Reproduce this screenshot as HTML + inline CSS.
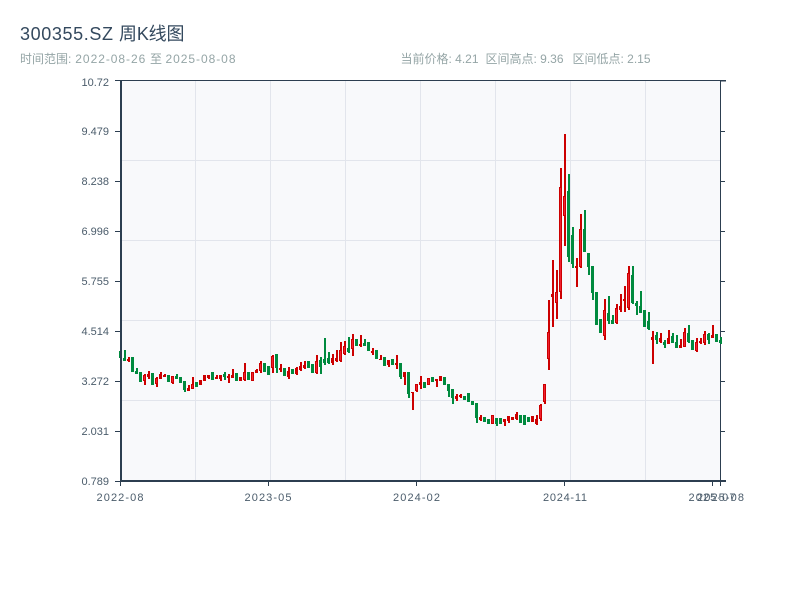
<!DOCTYPE html>
<html><head><meta charset="utf-8"><title>300355.SZ 周K线图</title>
<style>
html,body{margin:0;padding:0;background:#fff;width:800px;height:600px;overflow:hidden}
svg{display:block;font-family:"Liberation Sans","Noto Sans CJK SC",sans-serif}
</style></head><body>
<svg width="800" height="600" viewBox="0 0 800 600" xmlns="http://www.w3.org/2000/svg">
<text x="20" y="40" font-size="18" fill="#34495e" textLength="93">300355.SZ</text>
<text x="119" y="40" font-size="18" fill="#34495e" textLength="65.5">周K线图</text>
<g font-size="12" fill="#95a5a6">
<text x="20" y="63">时间范围:</text>
<text x="75.3" y="63" textLength="70">2022-08-26</text>
<text x="150" y="63">至</text>
<text x="165.5" y="63" textLength="70">2025-08-08</text>
<text x="400.5" y="63">当前价格: 4.21</text>
<text x="485.5" y="63">区间高点: 9.36</text>
<text x="572.5" y="63">区间低点: 2.15</text>
</g>
<rect x="120" y="81" width="600" height="400" fill="#f8f9fb"/>
<path d="M122 160.5H720M122 240.5H720M122 320.5H720M122 400.5H720M195.5 81V481M270.5 81V481M345.5 81V481M420.5 81V481M495.5 81V481M570.5 81V481M645.5 81V481" stroke="#e2e5ec" stroke-width="1" fill="none"/>
<path d="M720.5 80V481M720 81H726M720 131.5H725M720 181.5H725M720 231.5H725M720 281.5H725M720 331.5H725M720 381.5H725M720 431.5H725" stroke="#2c3e50" stroke-width="1" fill="none"/>
<g fill="none" stroke="#008a3e">
<path stroke-width="2" d="M121 351V358M125 350V361M133 357V372M137 368V374M141 372V382M153 373V385M169 375V382M177 374V379M181 377V383M185 381V392M197 382V387M213 372V380M225 372V380M237 373V381M249 372V380M265 363V372M269 366V375M277 354V373M285 368V376M293 369V374M309 361V368M313 364V373M321 357V374M325 338V365M329 352V364M349 337V353M357 339V346M365 339V346M369 342V351M377 350V359M385 357V366M393 359V365M401 363V379M409 372V398M425 382V388M433 377V382M445 377V385M449 384V397M453 389V404M465 396V400M469 393V402M473 401V405M477 403V423M485 417V422M489 419V424M497 418V426M501 418V424M521 415V423M525 415V425M529 417V422M569 174V262M573 227V268M585 210V252M589 253V275M593 266V300M597 292V325M601 319V333M609 296V324M613 315V324M633 266V304M637 301V315M641 291V313M645 310V327M649 312V330M657 332V344M665 340V348M673 333V343M677 335V348M689 325V343M693 340V350M709 333V344M717 334V342M721 337V344"/>
<path stroke-width="3" d="M120.5 351V358M124.5 358V361M132.5 357V372M136.5 371V374M140.5 372V382M152.5 373V385M168.5 375V382M176.5 376V379M180.5 377V383M184.5 381V390M196.5 382V387M212.5 372V380M224.5 374V377M236.5 373V381M248.5 372V380M264.5 363V372M268.5 366V375M276.5 354V368M284.5 368V376M292.5 369V374M308.5 361V368M312.5 364V373M320.5 360V367M324.5 359V363M328.5 358V363M348.5 348V352M356.5 339V346M364.5 343V346M368.5 342V351M376.5 350V359M384.5 357V366M392.5 359V365M400.5 363V377M408.5 372V394M424.5 382V388M432.5 377V382M444.5 377V385M448.5 384V391M452.5 389V398M464.5 396V400M468.5 393V402M472.5 401V405M476.5 403V418M484.5 417V422M488.5 419V424M496.5 418V424M500.5 418V424M520.5 415V423M524.5 415V425M528.5 417V422M568.5 191V257M572.5 235V264M584.5 229V252M588.5 253V267M592.5 266V293M596.5 292V325M600.5 319V333M608.5 313V321M612.5 320V324M632.5 275V303M636.5 303V306M640.5 306V313M644.5 310V327M648.5 321V329M656.5 335V340M664.5 342V345M672.5 336V343M676.5 342V348M688.5 333V342M692.5 340V350M708.5 334V340M716.5 334V342M720.5 340V343"/>
</g>
<g fill="none" stroke="#cc0000">
<path stroke-width="2" d="M129 357V362M145 374V385M149 371V379M157 377V387M161 372V379M165 374V377M173 376V384M189 385V391M193 377V389M201 380V385M205 375V381M209 375V379M217 375V379M221 375V381M229 374V383M233 369V378M241 377V381M245 363V381M253 372V381M257 369V373M261 361V373M273 355V373M281 364V372M289 367V379M297 367V375M301 362V371M305 361V369M317 355V374M333 354V365M337 350V362M341 342V362M345 341V355M353 334V356M361 335V347M373 348V355M381 355V360M389 360V367M397 355V369M405 372V385M413 392V410M417 384V392M421 376V389M429 378V385M437 379V387M441 376V381M457 394V401M461 394V398M481 415V421M493 415V424M505 419V426M509 416V423M513 417V420M517 412V420M533 416V422M537 415V425M541 404V421M545 384V404M549 300V370M553 260V327M557 270V319M561 168V299M565 134V246M577 258V287M581 214V268M605 299V340M617 304V324M621 294V312M625 286V312M629 266V310M653 331V364M661 333V343M669 330V344M681 339V348M685 328V347M697 338V352M701 338V344M705 331V345M713 325V338"/>
<path stroke-width="3" d="M128.5 359V361M144.5 375V381M148.5 374V377M156.5 378V384M160.5 374V379M164.5 375V377M172.5 376V383M188.5 388V391M192.5 384V389M200.5 380V385M204.5 375V381M208.5 375V378M216.5 377V379M220.5 375V379M228.5 376V378M232.5 375V378M240.5 377V381M244.5 372V380M252.5 372V381M256.5 370V373M260.5 363V371M272.5 356V368M280.5 368V370M288.5 371V377M296.5 368V374M300.5 366V370M304.5 365V368M316.5 361V373M332.5 358V363M336.5 358V361M340.5 350V361M344.5 346V354M352.5 339V349M360.5 344V346M372.5 351V353M380.5 359V360M388.5 360V365M396.5 363V365M404.5 372V377M412.5 392V393M416.5 384V391M420.5 382V385M428.5 378V385M436.5 379V381M440.5 376V381M456.5 396V399M460.5 395V397M480.5 417V420M492.5 415V424M504.5 419V422M508.5 416V421M512.5 417V420M516.5 414V419M532.5 416V422M536.5 419V424M540.5 405V419M544.5 384V402M548.5 332V359M552.5 294V297M556.5 292V303M560.5 187V292M564.5 196V216M576.5 266V268M580.5 229V267M604.5 310V336M616.5 308V323M620.5 306V310M624.5 299V301M628.5 273V308M652.5 337V340M660.5 338V342M668.5 338V344M680.5 345V348M684.5 332V347M696.5 342V351M700.5 341V343M704.5 334V343M712.5 335V338"/>
</g>
<g fill="none" stroke="#f02030" stroke-width="1">
<path d="M144.5 376V380M156.5 379V383M172.5 377V382M192.5 385V388M244.5 373V379M252.5 373V380M260.5 364V370M272.5 357V367M316.5 362V372M340.5 351V360M344.5 347V353M352.5 340V348M416.5 385V390M428.5 379V384M492.5 416V423M540.5 406V418M544.5 385V401M548.5 333V358M556.5 293V302M560.5 188V291M564.5 197V215M580.5 230V266M604.5 311V335M616.5 309V322M628.5 274V307M684.5 333V346M696.5 343V350M704.5 335V342"/>
</g>
<path d="M121 81V482" stroke="#2c3e50" stroke-width="2" fill="none"/>
<path d="M115 80.5H726M115 131.5H120M115 181.5H120M115 231.5H120M115 281.5H120M115 331.5H120M115 381.5H120M115 431.5H120M115 481.5H120M120.5 482V486M268.5 482V486M416.5 482V486M564.5 482V486M712.5 482V486M720.5 482V486" stroke="#2c3e50" stroke-width="1" fill="none"/>
<path d="M120 481H726" stroke="#2c3e50" stroke-width="2" fill="none"/>
<g font-size="11" fill="#4b5c6b" text-anchor="end">
<text x="109" y="86">10.72</text>
<text x="109" y="135">9.479</text>
<text x="109" y="185">8.238</text>
<text x="109" y="235">6.996</text>
<text x="109" y="285">5.755</text>
<text x="109" y="335">4.514</text>
<text x="109" y="385">3.272</text>
<text x="109" y="435">2.031</text>
<text x="109" y="485">0.789</text>
</g>
<g font-size="11" fill="#4b5c6b">
<text x="96.5" y="501" textLength="47">2022-08</text>
<text x="244.5" y="501" textLength="47">2023-05</text>
<text x="393" y="501" textLength="47">2024-02</text>
<text x="543" y="501" textLength="44">2024-11</text>
<text x="688.5" y="501" textLength="47">2025-07</text>
<text x="697" y="501" textLength="47">2025-08</text>
</g>
</svg>
</body></html>
